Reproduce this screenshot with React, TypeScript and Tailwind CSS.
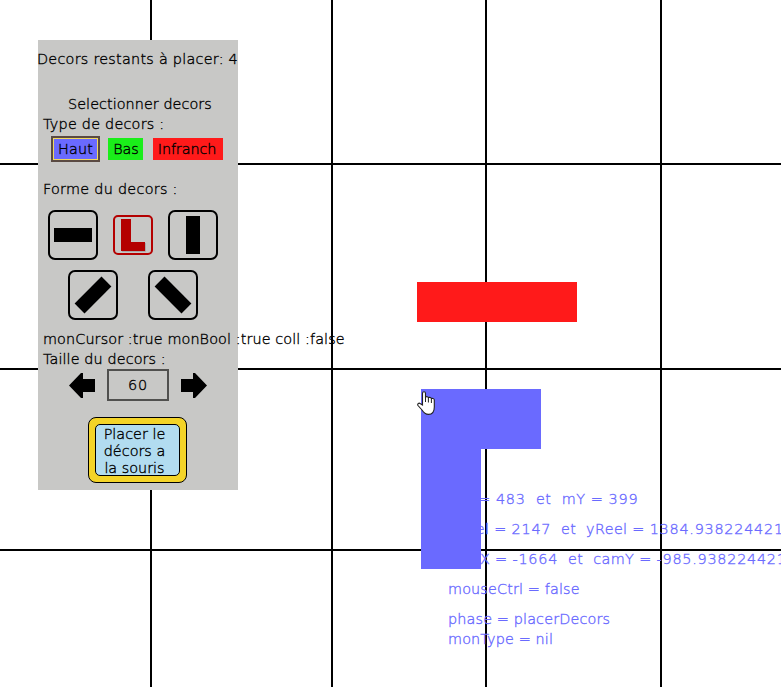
import React from "react";

const verticals = ["left-[150px]", "left-[331px]", "left-[485px]", "left-[660px]"];
const horizontals = ["top-[163px]", "top-[368px]", "top-[549px]"];

function ShapeButton({ children }: { children: React.ReactNode }) {
  return (
    <button className="flex size-[50px] items-center justify-center rounded-[7px] border-2 border-black">
      {children}
    </button>
  );
}

function Arrow({ flip }: { flip?: boolean }) {
  return (
    <svg width="26" height="26" viewBox="0 0 26 26" className={flip ? "-scale-x-100" : ""}>
      <path d="M0 13.5 L12 1 H14 V7 H26 V20 H14 V26 H12 Z" fill="#000" />
    </svg>
  );
}

function Panel() {
  return (
    <div className="absolute left-[38px] top-[40px] flex h-[450px] w-[200px] flex-col bg-[#c8c8c6] whitespace-nowrap text-black">
      <p className="mt-[9px] -ml-px tracking-[0.25px]">Decors restants à placer: 4</p>
      <p className="mt-[25px] pl-[30px] tracking-[0.05px]">Selectionner decors</p>
      <p className="pl-[5px] tracking-[0.23px]">Type de decors :</p>
      <div className="mt-[2px] flex h-[26px] items-center pl-[13px]">
        <button className="h-[26px] w-[49px] border-2 border-[#5a4a42] bg-[#6a6aff]">
          <span className="flex h-[22px] items-center justify-center border border-[#f0d860] tracking-[0.2px]">Haut</span>
        </button>
        <button className="ml-2 h-[22px] w-[35px] bg-[#1aee1a] pl-[1px]">Bas</button>
        <button className="ml-[10px] h-[22px] w-[70px] bg-[#ff1a1a] pr-[2px] tracking-[-0.1px]">Infranch</button>
      </div>
      <p className="mt-[17px] pl-[5px] tracking-[0.27px]">Forme du decors :</p>
      <div className="mt-[11px] flex items-center pl-[10px]">
        <ShapeButton>
          <span className="h-[14px] w-[38px] bg-black" />
        </ShapeButton>
        <button className="ml-[15px] size-10 rounded-[5px] border-2 border-[#b40000]">
          <svg width="36" height="36" viewBox="0 0 36 36">
            <path d="M7 34.5 H30.5 V26" stroke="#aaa" fill="none" />
            <path d="M6 2 H16 V25 H30 V34 H6 Z" fill="#b40000" />
          </svg>
        </button>
        <div className="ml-[15px]">
          <ShapeButton>
            <span className="h-[38px] w-[14px] bg-black" />
          </ShapeButton>
        </div>
      </div>
      <div className="mt-[10px] flex gap-[30px] pl-[30px]">
        <ShapeButton>
          <span className="h-[14px] w-[38px] -rotate-45 bg-black" />
        </ShapeButton>
        <ShapeButton>
          <span className="h-[14px] w-[38px] rotate-45 bg-black" />
        </ShapeButton>
      </div>
      <p className="mt-[9px] pl-[5px] tracking-[0.1px]">monCursor :true monBool :true coll :false</p>
      <p className="pl-[5px] tracking-[0.1px]">Taille du decors :</p>
      <div className="flex h-8 items-center pl-[31px]">
        <Arrow />
        <span className="ml-3 flex h-8 w-[62px] items-center justify-center border-2 border-[#50504e] tracking-[0.8px]">
          60
        </span>
        <span className="ml-3">
          <Arrow flip />
        </span>
      </div>
      <button className="mt-4 ml-[50px] h-[66px] w-[99px] rounded-[8px] border border-black bg-[#f4d428] p-[6px]">
        <span className="block h-[52px] w-[85px] rounded-[5px] border border-black bg-[#b2dcf0] pt-px pr-1.5 text-center leading-[17px]">
          Placer le
          <br />
          décors a
          <br />
          la souris
        </span>
      </button>
    </div>
  );
}

function Num({ children }: { children: string }) {
  return <span className="tracking-[0.75px]">{children}</span>;
}

function Debug() {
  return (
    <div className="absolute left-[448px] top-[489px] whitespace-pre text-[#6a6aff] tracking-[0.14px]">
      <p className="tracking-[0.56px]">
        mX = <Num>483</Num>
        {"  et  mY = "}
        <Num>399</Num>
      </p>
      <p className="mt-[10px] tracking-[0.35px]">
        xReel = <Num>2147</Num>
        {"  et  yReel = "}
        <Num>1384.938224421</Num>
      </p>
      <p className="mt-[10px] tracking-[0.38px]">
        camX = <Num>-1664</Num>
        {"  et  camY = "}
        <Num>-985.938224421</Num>
      </p>
      <p className="mt-[10px]">mouseCtrl = false</p>
      <p className="mt-[10px]">phase = placerDecors</p>
      <p>monType = nil</p>
    </div>
  );
}

export default function App() {
  return (
    <main className="relative h-[687px] w-[781px] overflow-hidden bg-white font-['DejaVu_Sans',sans-serif] text-[14.4px] leading-5 font-extralight [-webkit-text-stroke:0.35px]">
      {verticals.map((v) => (
        <div key={v} className={`absolute top-0 h-full w-[2px] bg-black ${v}`} />
      ))}
      {horizontals.map((h) => (
        <div key={h} className={`absolute left-0 h-[2px] w-full bg-black ${h}`} />
      ))}
      <Debug />
      <div className="absolute left-[417px] top-[282px] h-10 w-40 bg-[#ff1a1a]" />
      <div className="absolute left-[421px] top-[389px] h-[60px] w-[120px] bg-[#6a6aff]" />
      <div className="absolute left-[421px] top-[449px] h-[120px] w-[60px] bg-[#6a6aff]" />
      <Panel />
      <svg className="absolute left-[417px] top-[391px]" width="18" height="24" viewBox="0 0 18 24">
        <path
          d="M5.5 14 V2.5 C5.5 0.2 8.5 0.2 8.5 2.5 V6 C10 5.2 11 5.8 11.3 6.6 C13 6 14 6.6 14.3 7.5 C16 7 17.3 7.8 17.3 9 V16 C17.3 20 15.5 23.4 11.5 23.4 C8 23.4 6.5 21.5 5 19 L1 14.5 C0 12.5 2 11.5 3.5 12.8 Z"
          fill="#fff"
          stroke="#222"
          strokeWidth="1.1"
        />
        <path d="M8.5 6 V11 M11.4 7 V11.5 M14.4 8 V12" stroke="#222" fill="none" />
      </svg>
    </main>
  );
}
